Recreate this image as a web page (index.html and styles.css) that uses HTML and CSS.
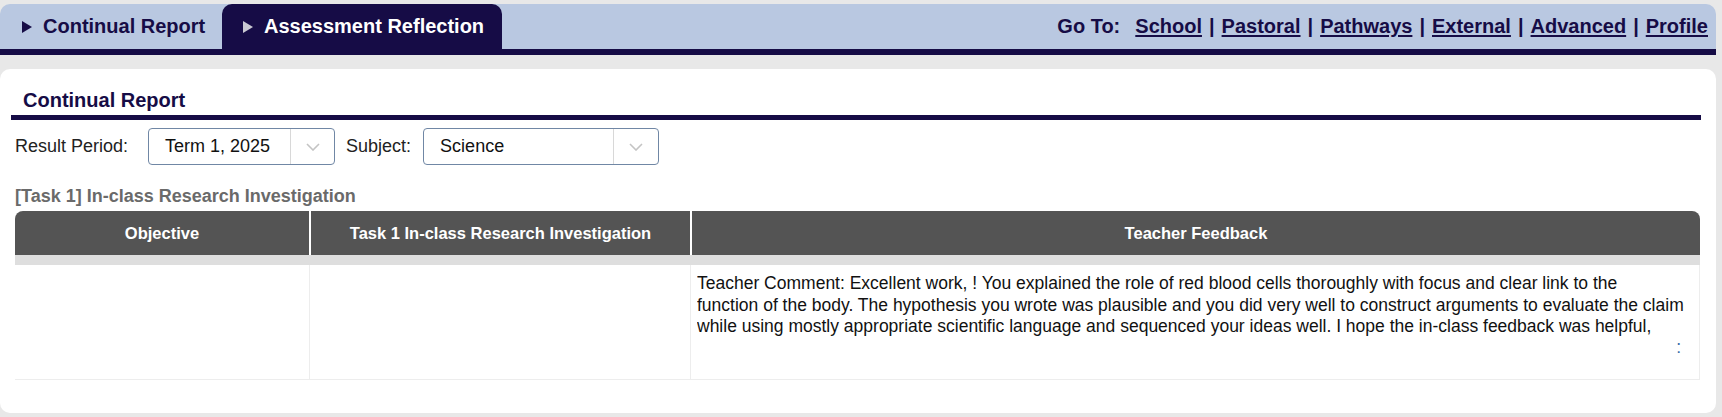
FILE: index.html
```html
<!DOCTYPE html>
<html lang="en">
<head>
<meta charset="utf-8">
<title>Continual Report</title>
<link rel="stylesheet" href="styles.css">
</head>
<body>
<div class="page">
  <nav class="topbar">
    <a class="tab tab-first"><span class="tri"></span><span class="tab-label">Continual Report</span></a>
    <a class="tab tab-active"><span class="tri"></span><span class="tab-label">Assessment Reflection</span></a>
    <div class="goto">
      <span class="goto-label">Go To:</span>
      <a class="goto-link">School</a><span class="sep">|</span><a class="goto-link">Pastoral</a><span class="sep">|</span><a class="goto-link">Pathways</a><span class="sep">|</span><a class="goto-link">External</a><span class="sep">|</span><a class="goto-link">Advanced</a><span class="sep">|</span><a class="goto-link">Profile</a>
    </div>
  </nav>

  <main class="panel">
    <h2 class="panel-title">Continual Report</h2>

    <div class="filters">
      <span class="filter-label first">Result Period:</span>
      <div class="select select-period">
        <span class="select-value">Term 1, 2025</span>
        <span class="select-arrow"><svg width="14" height="8" viewBox="0 0 14 8"><polyline points="1,1 7,7 13,1" fill="none" stroke="#c4c4c4" stroke-width="1.6"/></svg></span>
      </div>
      <span class="filter-label">Subject:</span>
      <div class="select select-subject">
        <span class="select-value">Science</span>
        <span class="select-arrow"><svg width="14" height="8" viewBox="0 0 14 8"><polyline points="1,1 7,7 13,1" fill="none" stroke="#c4c4c4" stroke-width="1.6"/></svg></span>
      </div>
    </div>

    <div class="task-title">[Task 1] In-class Research Investigation</div>

    <div class="grid">
      <div class="th th-left">Objective</div>
      <div class="th">Task 1 In-class Research Investigation</div>
      <div class="th th-right">Teacher Feedback</div>
      <div class="band"></div>
      <div class="td td-first"></div>
      <div class="td"></div>
      <div class="td td-feedback">
        <div class="fb-clip">
          <p class="fb-text">Teacher Comment: Excellent work, ! You explained the role of red blood cells thoroughly with focus and clear link to the<br>function of the body. The hypothesis you wrote was plausible and you did very well to construct arguments to evaluate the claim<br>while using mostly appropriate scientific language and sequenced your ideas well. I hope the in-class feedback was helpful,</p>
          <div class="fb-more"><span class="fb-colon">:</span></div>
          <p class="fb-next">Your next move: aim to use more precise vocabulary in your answers</p>
        </div>
      </div>
    </div>
  </main>
</div>
</body>
</html>
```

FILE: styles.css
```css
html, body {
  margin: 0;
  padding: 0;
  background: #e8e8e8;
}

body {
  font-family: "Liberation Sans", Arial, sans-serif;
  color: #111;
}

.page {
  width: 1716px;
  padding-top: 4px;
}

/* ---------- top navigation ---------- */
.topbar {
  display: flex;
  align-items: stretch;
  height: 45px;
  background: #b9c8e1;
  border-bottom: 6px solid #160c46;
  border-radius: 10px 10px 0 0;
}

.tab {
  display: flex;
  align-items: center;
  box-sizing: border-box;
  font-size: 20px;
  font-weight: bold;
  color: #160c46;
  text-decoration: none;
}

.tab-first {
  width: 222px;
  padding-left: 22px;
}

.tab-active {
  width: 280px;
  padding-left: 21px;
  background: #160c46;
  color: #fff;
  border-radius: 10px 10px 0 0;
}

.tri {
  display: inline-block;
  width: 0;
  height: 0;
  border-left: 10px solid #160c46;
  border-top: 6px solid transparent;
  border-bottom: 6px solid transparent;
  margin-right: 11px;
}

.tab-active .tri {
  border-left-color: #c9c9d2;
  margin-right: 11px;
}

.goto {
  margin-left: auto;
  padding-right: 8px;
  display: flex;
  align-items: center;
  font-size: 20px;
  font-weight: bold;
  color: #160c46;
}

.goto-label {
  margin-right: 15px;
}

.goto-link {
  color: #160c46;
  text-decoration: underline;
  text-underline-offset: 2px;
}

.sep {
  margin: 0 7px;
}

/* ---------- panel ---------- */
.panel {
  margin-top: 14px;
  background: #fff;
  border-radius: 10px;
  padding: 19px 16px 33px 15px;
}

.panel-title {
  margin: 0 -1px 0 -4px;
  padding: 0 0 3px 12px;
  font-size: 20px;
  line-height: 24px;
  font-weight: bold;
  color: #160c46;
  border-bottom: 5px solid #160c46;
}

.filters {
  display: flex;
  align-items: center;
  margin-top: 8px;
  height: 37px;
  font-size: 18px;
}

.filter-label {
  color: #222;
  margin: 0 12px 0 11px;
}

.filter-label.first {
  margin-left: 0;
  margin-right: 20px;
}

.select {
  display: flex;
  align-items: stretch;
  box-sizing: border-box;
  height: 37px;
  border: 1px solid #7087a5;
  border-radius: 4px;
  background: #fff;
}

.select-period { width: 187px; }
.select-subject { width: 236px; }

.select-value {
  flex: 1;
  display: flex;
  align-items: center;
  padding-left: 16px;
  color: #111;
}

.select-arrow {
  width: 43px;
  display: flex;
  align-items: center;
  justify-content: center;
  border-left: 1px solid #d8d8d8;
}

.select-subject .select-arrow { width: 44px; }

.task-title {
  margin-top: 20px;
  font-size: 18px;
  line-height: 22px;
  font-weight: bold;
  color: #6a6a6a;
}

/* ---------- table ---------- */
.grid {
  margin-top: 4px;
  display: grid;
  grid-template-columns: 294px 381px 1fr;
}

.th {
  height: 44px;
  display: flex;
  align-items: center;
  justify-content: center;
  background: #545454;
  color: #fff;
  font-size: 16.5px;
  font-weight: bold;
  border-left: 2px solid #fff;
}

.th-left {
  border-left: none;
  border-top-left-radius: 8px;
}

.th-right {
  border-top-right-radius: 8px;
}

.band {
  grid-column: 1 / -1;
  height: 10px;
  background: #dedede;
}

.td {
  height: 115px;
  box-sizing: border-box;
  border-left: 1px solid #ededed;
  border-bottom: 1px solid #ededed;
}

.td-first {
  border-left: none;
}

.td-feedback {
  border-right: 1px solid #ededed;
  padding: 8px 8px 0 6px;
}

.fb-clip {
  height: 102px;
  overflow: hidden;
  font-size: 17.5px;
  line-height: 21.5px;
  color: #111;
}

.fb-text {
  margin: 0;
  white-space: nowrap;
}

.fb-more {
  height: 21.5px;
  line-height: 18px;
  text-align: right;
  padding-right: 10px;
}

.fb-colon {
  color: #3a6ea8;
}

.fb-next {
  margin: 12.5px 0 0;
  white-space: nowrap;
}
```
